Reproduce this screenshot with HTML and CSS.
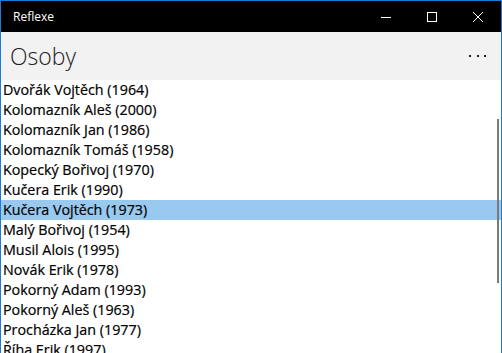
FILE: index.html
```html
<!DOCTYPE html>
<html lang="cs">
<head>
    <meta charset="UTF-8">
    <meta name="viewport" content="width=device-width, initial-scale=1.0">
    <link rel="stylesheet" href="styles.css">
    <title>Reflexe</title>
</head>
<body>
    <div class="window">
        <div class="titlebar">
            <span class="title">Reflexe</span>
            <div class="controls">
                <span class="ctrl">
                    <svg width="10" height="10" viewBox="0 0 10 10"><path d="M0 5.5H10" stroke="#fff" stroke-width="1"/></svg>
                </span>
                <span class="ctrl">
                    <svg width="10" height="10" viewBox="0 0 10 10"><rect x="0.5" y="0.5" width="9" height="9" fill="none" stroke="#fff" stroke-width="1"/></svg>
                </span>
                <span class="ctrl">
                    <svg width="10" height="10" viewBox="0 0 10 10"><path d="M0 0L10 10M10 0L0 10" stroke="#fff" stroke-width="1"/></svg>
                </span>
            </div>
        </div>
        <div class="header">
            <h1>Osoby</h1>
            <span class="more">
                <svg width="18" height="3" viewBox="0 0 18 3">
                    <rect x="0" y="0" width="2" height="2" fill="#222"/>
                    <rect x="8" y="0" width="2" height="2" fill="#222"/>
                    <rect x="15" y="0" width="2" height="2" fill="#222"/>
                </svg>
            </span>
        </div>
        <div class="listArea">
            <ul class="list">
                <li>Dvořák Vojtěch (1964)</li>
                <li>Kolomazník Aleš (2000)</li>
                <li>Kolomazník Jan (1986)</li>
                <li>Kolomazník Tomáš (1958)</li>
                <li>Kopecký Bořivoj (1970)</li>
                <li>Kučera Erik (1990)</li>
                <li class="selected">Kučera Vojtěch (1973)</li>
                <li>Malý Bořivoj (1954)</li>
                <li>Musil Alois (1995)</li>
                <li>Novák Erik (1978)</li>
                <li>Pokorný Adam (1993)</li>
                <li>Pokorný Aleš (1963)</li>
                <li>Procházka Jan (1977)</li>
                <li>Říha Erik (1997)</li>
            </ul>
            <div class="scrollbar"></div>
        </div>
    </div>
</body>
</html>
```

FILE: styles.css
```css
body {
    margin: 0;
    padding: 0;
    font-family: "Open Sans", "Noto Sans", sans-serif;
    overflow: hidden;
}

.window {
    width: 500px;
    height: 352px;
    border: 1px solid #1a7ad4;
    display: flex;
    flex-direction: column;
    overflow: hidden;
    background-color: #fff;
}

.titlebar {
    height: 31px;
    flex: none;
    background-color: #000;
    color: #fff;
    display: flex;
    align-items: center;
    justify-content: space-between;
}

.title {
    font-size: 12px;
    padding-left: 12px;
}

.controls {
    display: flex;
    padding-right: 18px;
}

.ctrl {
    width: 46px;
    display: flex;
    justify-content: flex-end;
    align-items: center;
}

.ctrl svg {
    display: block;
}

.header {
    height: 48px;
    flex: none;
    background-color: #f2f2f2;
    display: flex;
    align-items: center;
    justify-content: space-between;
}

h1 {
    margin: 0;
    padding-left: 9px;
    font-size: 23px;
    font-weight: 300;
    color: #222;
}

.more {
    padding-right: 14px;
    padding-top: 1px;
}

.more svg {
    display: block;
}

.listArea {
    flex: 1;
    position: relative;
    overflow: hidden;
}

.list {
    list-style: none;
    margin: 0;
    padding: 0;
}

.list li {
    height: 20px;
    line-height: 20px;
    font-size: 14.3px;
    padding-left: 2px;
    color: #000;
    white-space: nowrap;
    -webkit-text-stroke: 0.2px #000;
}

.list li.selected {
    background-color: #99c9ef;
}

.scrollbar {
    position: absolute;
    right: 2px;
    top: 39px;
    width: 2px;
    height: 164px;
    background-color: #7a7a7a;
}
```
